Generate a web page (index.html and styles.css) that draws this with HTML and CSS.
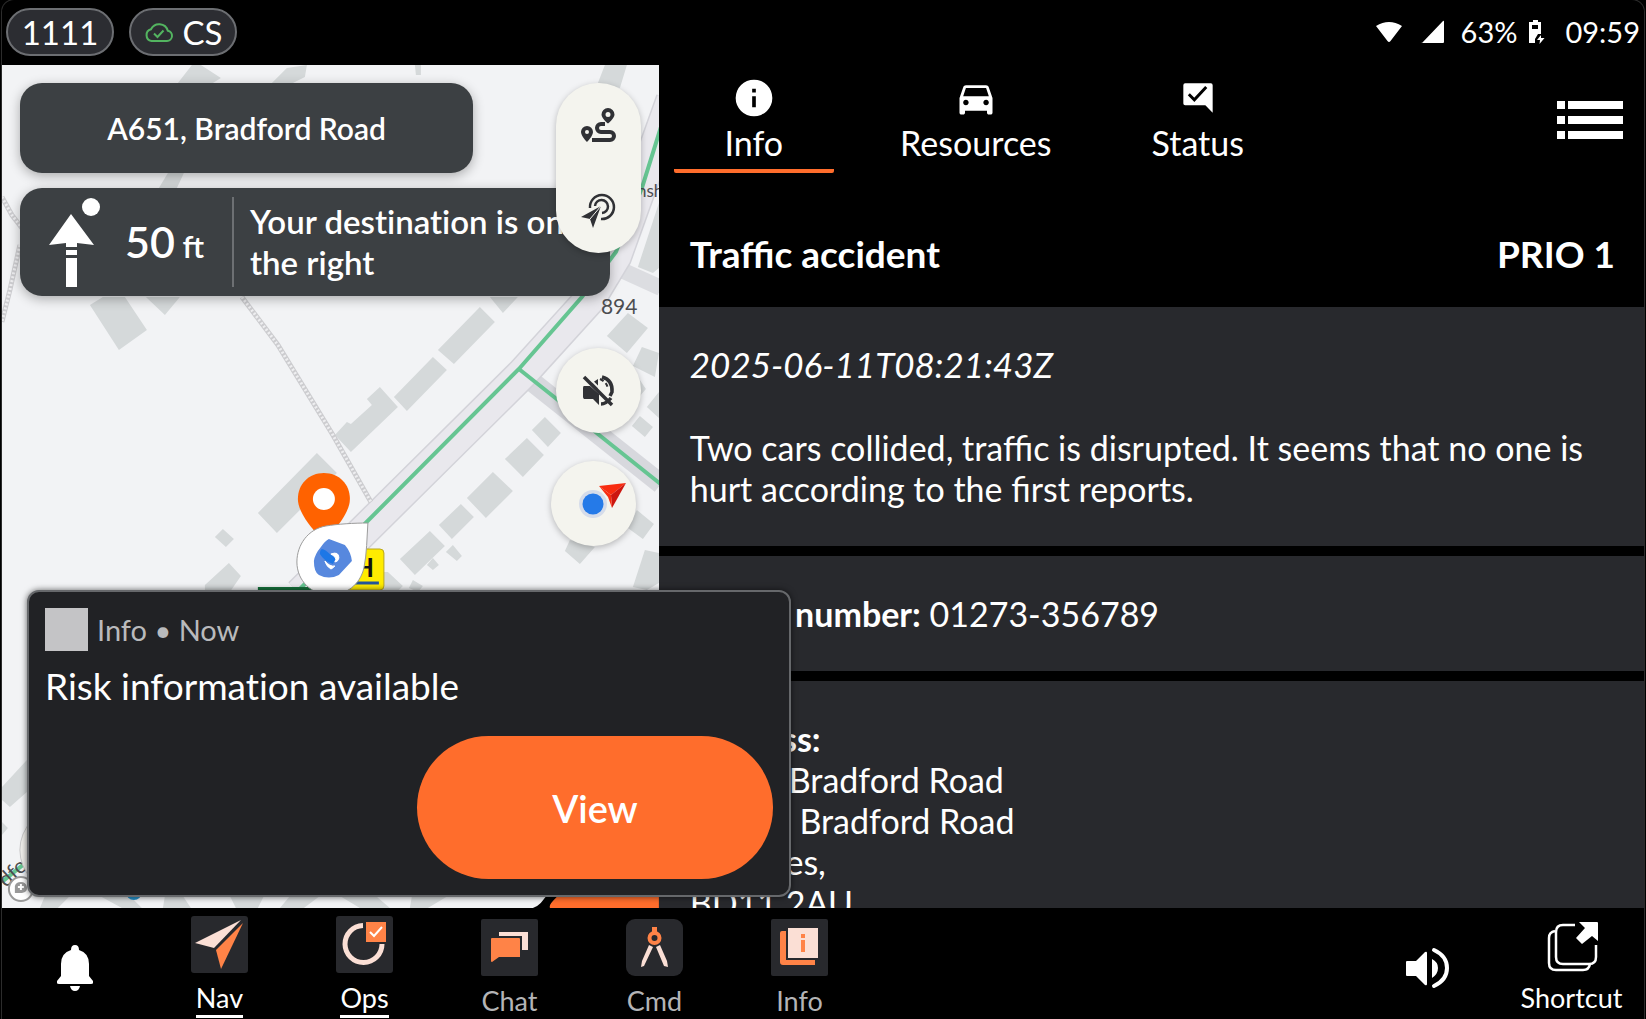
FILE: index.html
```html
<!DOCTYPE html>
<html lang="en">
<head>
<meta charset="utf-8">
<title>Incident 1111</title>
<meta name="viewport" content="width=device-width, initial-scale=1">
<link rel="stylesheet" href="styles.css">
</head>
<body>
<div class="app">
  <header class="topbar">
    <div class="pills">
      <span class="pill">1111</span>
      <span class="pill">
        <svg class="cloud" viewBox="0 0 30 22" aria-hidden="true"><path d="M7.500 20H23a5.200 5.200 0 0 0 .8-10.300A9 9 0 0 0 7 8.300 6 6 0 0 0 7.500 20Z"/><path d="m10 12.500 3.500 3.500 6-6.500"/></svg>
        CS
      </span>
    </div>
    <div class="system">
      <svg class="wifi" viewBox="0 0 28 22" aria-hidden="true"><path d="M1 5Q14-3 27 5L15.500 20q-1.500 2-3 0Z"/></svg>
      <svg class="signal" viewBox="0 0 24 24" aria-hidden="true"><path d="M1 23 22 1q1-1 1 1v20q0 1-1 1H2q-2 0-1-1Z"/></svg>
      <span>63%</span>
      <svg class="battery" viewBox="0 0 16 24" aria-hidden="true"><path fill-rule="evenodd" d="M4 0h5v2h3v12H9l-3 5v4H0V2h4ZM3 5v4h6V5ZM12 15l-4 5h3l-.5 4 5-6h-3.500Z"/></svg>
      <span class="clock">09:59</span>
    </div>
  </header>

  <main class="main">
    <section class="map" aria-label="Navigation map">
      <svg class="map-art" viewBox="2 65 657 843" preserveAspectRatio="xMidYMid slice" aria-hidden="true">
        <rect x="2" y="65" width="657" height="843" fill="#f2f3f5"/>
        <g fill="#d5d9da">
          <path d="M192 65h9l20 13-8 5h-35ZM287 68l20-3-2 12-12 6h-21ZM168 173h16l-7 15h-18ZM90 305l13-8h22l22 33-28 20ZM146 297h34l-15 18ZM415 65h6v10h-5ZM605 65h22l-7 23-22-5Z"/>
          <path d="M490 297l13 16 15-16ZM480 307l15 15-41 42-16-14ZM433 357l14 13-40 41-13-14ZM380 387l18 20-47 45-16-17 12-13 4 2 21-19-5-6ZM545 417l16 16-13 14-16-17ZM527 438l17 17-21 22-18-18ZM493 472l20 19-27 27-19-20ZM461 504l13 13-22 22-13-14ZM430 531l15 15-30 29-15-16ZM453 545l9 11-5 5-11-9ZM433 558l6 7-6 5-6-5ZM380 572h8l15 14-6 6h-17ZM413 580l10 6-5 6-9-4Z"/>
          <path d="M628 313l20 15-21 25-20-17ZM642 347l17 6-4 24-22-11ZM659 392l-12 15 12 11ZM640 416l13 11-8 10-13-11ZM640 380l6 9-6 7ZM637 510l17 14-11 15-15-11ZM570 540l25 7-15 17-15-13ZM645 550l14 3v30l-12 7-14-3ZM659 203v65l-6 5-15-6Z"/>
          <path d="M317 453l20 20-60 60-19-20ZM223 529l11 10-8 8-11-10ZM229 563l12 13-11 16h-25v-7ZM2 787l25-27v32L10 807l-8-7ZM2 822l6 6-6 7Z"/>
          <path d="M45 896h25l-12 12H40ZM100 896h30l12 12h-20ZM165 896h18l8 12h-28ZM230 896h34l-6 12h-22ZM290 896h30l-16 12h-24ZM340 896h36l14 12h-30ZM412 896h36l-20 12h-18Z"/>
        </g>
        <path d="M617 268l44 20" stroke="#dcdde1" stroke-width="16" fill="none"/>
        <path d="M530 380l131 104" stroke="#d7d8dd" stroke-width="20" fill="none"/>
        <path d="M672 100 616 256 590 299 522 374 300 594" stroke="#d3d3d9" stroke-width="33" fill="none"/>
        <path d="M672 100 616 256 590 299 522 374 300 594" stroke="#e9e8ed" stroke-width="30" fill="none"/>
        <path d="M242 297 278 345 333 435 371 502M2 197 12 215 22 228M20 245 10 290 2 322" stroke="#cccccf" stroke-width="5" fill="none"/>
        <path d="M242 297 278 345 333 435 371 502M2 197 12 215 22 228M20 245 10 290 2 322" stroke="#eeeef0" stroke-width="3" stroke-dasharray="2 2" fill="none"/>
        <path d="M662 124 642 188 616 252 582 297 519 369 300 589M519 369 558 400 598 434 662 485M2 882 34 856" stroke="#66c592" stroke-width="4" fill="none"/>
        <path d="M258 587h56l-4 6h-52Z" fill="#17733c"/>
        <text class="map-label" x="601" y="314">894</text>
        <text class="map-label small" x="637" y="197">nsh</text>
        <text class="map-label" x="6" y="888" transform="rotate(-42 6 888)">dfor</text>
        <circle cx="62" cy="850" r="42" fill="#f0efeb" stroke="#c9c9c9"/>
        <circle cx="21" cy="889" r="12" fill="#fff" stroke="#999" stroke-width="2"/>
        <path d="M15 893v-7q1-4 6-4t6 5-5 6Z" fill="#999"/>
        <path d="M21 884v6m-3-3h6" stroke="#fff" stroke-width="2"/>
        <circle cx="134" cy="892" r="8" fill="#2590c8"/>
        <path d="M533 908q8-2 17-18h109v18Z" fill="#000"/>
        <path d="M550 908q-1-3 3-7l16-17h90v24Z" fill="#ff6d2c"/>
        <rect x="345" y="549" width="39" height="41" rx="4" fill="#ffec00" stroke="#b8a61c"/>
        <path d="M354 583h25" stroke="#23559b" stroke-width="3"/>
        <text class="heli" x="354" y="577">H</text>
        <path d="M324 473c-15 0-26 11-26 26 0 18 26 42 26 42s26-24 26-42c0-15-11-26-26-26Z" fill="#ff6200"/>
        <circle cx="324" cy="499" r="11" fill="#fff"/>
        <path d="M368 523c-14 0-30 1-42 3-18 3-29 19-29 36 0 19 15 33 33 33 16 0 30-10 34-27 3-14 3-31 4-45Z" fill="#fff" stroke="#9c9c9c" stroke-width="1"/>
        <path d="M329 539l16 6q6 7 7 16l-13 14q-10 5-20 0-5-3-5-14 1-7 7-14 4-6 8-8Z" fill="#5788de"/>
        <path d="M322 549q3 0 9 6l5 3-3 6q-9-3-13-10 0-4 2-5Z" fill="#1d77e6"/>
        <path d="M325 561q5 6 10 5-3 3-4 3-5-3-6-8ZM331 554q8-3 8 4-1 4-4 4 2-3 0-5-2-2-4-3Z" fill="#fff" stroke="#fff"/>
      </svg>

      <div class="guidance">
        <div class="street">A651, Bradford Road</div>
        <div class="turn">
          <svg class="turn-arrow" viewBox="0 0 52 92" aria-hidden="true"><circle cx="42" cy="11" r="9"/><path d="M22 18 45 49 28 47v4H17v-4L0 49ZM17 54h11v5H17ZM17 62h11v29H17Z"/></svg>
          <div class="distance">50 <small>ft</small></div>
          <p class="instruction">Your destination is on the right</p>
        </div>
      </div>

      <div class="controls">
        <div class="control-group">
          <button class="control" type="button" aria-label="Route">
            <svg viewBox="0 0 36 36" aria-hidden="true"><path fill-rule="evenodd" d="M28 0a6.500 6.500 0 0 1 6.500 6.500c0 4-6.500 9-6.500 9s-6.500-5-6.500-9A6.500 6.500 0 0 1 28 0Zm0 4a2.500 2.500 0 1 0 0 5 2.500 2.500 0 0 0 0-5ZM7 18a6 6 0 0 1 6 6c0 4-6 10-6 10S1 28 1 24a6 6 0 0 1 6-6Zm0 4a2 2 0 1 0 0 4 2 2 0 0 0 0-4Z"/><path d="M25 16h-4a4 4 0 0 0 0 8h9a4 4 0 0 1 0 8H12" fill="none" stroke="currentColor" stroke-width="4"/></svg>
          </button>
          <button class="control" type="button" aria-label="Follow position">
            <svg viewBox="0 0 36 36" aria-hidden="true"><path d="M1 24 21 13 13 35l-3-9Z"/><path d="M10 15a12 12 0 1 1 11 11M15 13a6.500 6.500 0 1 1 7 7" fill="none" stroke="currentColor" stroke-width="2.500"/><path d="M21 13 10 26" stroke="#f4f4ee"/></svg>
          </button>
        </div>
        <button class="control round" type="button" aria-label="Unmute">
          <svg viewBox="0 0 36 36" aria-hidden="true"><path d="M4 13h6l9 8v11l-6-6H4q-1-1-1-2v-9q0-2 1-2ZM12 10l6-4v10Z"/><path d="M22 4q11 3 10 15l-2 4" fill="none" stroke="currentColor" stroke-width="3.500"/><path d="M20 6q7 3 8 10" fill="none" stroke="currentColor" stroke-width="2" stroke-dasharray="4 3"/><path d="M7 3 34 30" stroke="#f4f4ee" stroke-width="2"/><path d="M4 4l28 28M21 31q5 0 10-6" fill="none" stroke="currentColor" stroke-width="3.500"/></svg>
        </button>
        <button class="control round compass" type="button" aria-label="Compass">
          <svg viewBox="0 0 84 84" aria-hidden="true"><circle cx="42" cy="42" r="14" fill="#d5dcea"/><circle cx="42" cy="42" r="10.500" fill="#257ae8"/><path d="M48 24 75 21 60 33Z" fill="#f82c10"/><path d="M60 33 75 21 61 46Z" fill="#cc1710"/><path d="M48 24 60 33 61 46 57 35Z" fill="#f82c10"/></svg>
        </button>
      </div>
    </section>

    <section class="incident">
      <nav class="tabs">
        <a class="tab active" href="#info">
          <svg viewBox="0 0 24 24" aria-hidden="true"><path d="M12 2a10 10 0 1 0 0 20 10 10 0 0 0 0-20Zm1 15h-2v-6h2Zm0-8h-2V7h2Z"/></svg>
          Info
        </a>
        <a class="tab" href="#resources">
          <svg viewBox="0 0 24 24" aria-hidden="true"><path d="M18.920 6.010C18.720 5.420 18.160 5 17.500 5h-11c-.66 0-1.210.42-1.420 1.010L3 12v8c0 .55.45 1 1 1h1c.55 0 1-.45 1-1v-1h12v1c0 .55.45 1 1 1h1c.55 0 1-.45 1-1v-8l-2.080-5.990zM6.500 16c-.83 0-1.500-.67-1.500-1.500S5.670 13 6.500 13s1.500.67 1.500 1.500S7.330 16 6.500 16zm11 0c-.83 0-1.500-.67-1.500-1.500s.67-1.500 1.500-1.500 1.500.67 1.500 1.500-.67 1.500-1.500 1.500zM5 11l1.500-4.500h11L19 11H5z"/></svg>
          Resources
        </a>
        <a class="tab" href="#status">
          <svg viewBox="0 0 24 24" aria-hidden="true"><path d="M5 4h14q1 0 1 1v15l-4-4H5q-1 0-1-1V5q0-1 1-1Z"/><path d="m7 10 3 3 6.500-7" fill="none" stroke="#000" stroke-width="1.600"/></svg>
          Status
        </a>
        <button class="menu" type="button" aria-label="Menu">
          <svg viewBox="0 0 66 38" aria-hidden="true"><path d="M0 0h8v8H0ZM11 0h55v8H11ZM0 15h8v8H0ZM11 15h55v8H11ZM0 30h8v8H0ZM11 30h55v8H11Z"/></svg>
        </button>
      </nav>
      <div class="title">
        <h1>Traffic accident</h1>
        <strong>PRIO 1</strong>
      </div>
      <div class="details">
        <article class="card">
          <time datetime="2025-06-11T08:21:43Z">2025-06-11T08:21:43Z</time>
          <p>Two cars collided, traffic is disrupted. It seems that no one is hurt according to the first reports.</p>
        </article>
        <article class="card"><b>Phone number:</b> 01273-356789</article>
        <article class="card"><b>Address:</b><br>Hotel, Bradford Road<br>No 61. Bradford Road<br>Birchnes,<br>BD11 2AU</article>
      </div>
    </section>

    <aside class="notice" role="alert">
      <div class="notice-head"><span class="notice-icon"></span>Info • Now</div>
      <p>Risk information available</p>
      <button class="view" type="button">View</button>
    </aside>
  </main>

  <footer class="dock">
    <button class="dock-item plain" type="button" aria-label="Notifications">
      <svg class="bell" viewBox="0 0 36 46" aria-hidden="true"><path d="M18 0q4 0 4 5 10 3 10 14v12l4 5q1 3-2 3H2q-3 0-2-3l4-5V19Q4 8 14 5q0-5 4-5ZM13 41h10q-1 5-5 5t-5-5Z"/></svg>
    </button>
    <a class="dock-item active" href="#nav">
      <svg class="tile" viewBox="0 0 57 57" aria-hidden="true"><rect width="57" height="57" rx="3"/><path class="pale" d="M4 27 50 4 23 32Z"/><path class="orange" d="M52 7 30 53 25 34Z"/></svg>
      <span>Nav</span>
    </a>
    <a class="dock-item active" href="#ops">
      <svg class="tile" viewBox="0 0 57 57" aria-hidden="true"><rect width="57" height="57" rx="3"/><path d="M27 9.500A18.500 18.500 0 1 0 46 28" fill="none" stroke="#fbdfd5" stroke-width="5"/><path class="orange" d="M30 6h20v20H30Z"/><path d="m34 16 4 4 8-9" fill="none" stroke="#fff" stroke-width="2"/></svg>
      <span>Ops</span>
    </a>
    <a class="dock-item" href="#chat">
      <svg class="tile" viewBox="0 0 57 57" aria-hidden="true"><rect width="57" height="57" rx="2"/><path class="pale" d="M18 13h29v18h-6V17H18Z"/><path class="orange" d="M11 19h27q1 0 1 1v18H18l-7 5q-1 0-1-1V20q0-1 1-1Z"/></svg>
      <span>Chat</span>
    </a>
    <a class="dock-item" href="#cmd">
      <svg class="tile" viewBox="0 0 57 57" aria-hidden="true"><rect width="57" height="57" rx="9"/><path class="pale" d="m23 26 4 2-9 19-3 1 1-6ZM34 26l-4 2 8 19 4 1-1-6Z"/><path class="orange" d="M26 8h5v7h-5Z"/><circle cx="28.500" cy="19" r="5" fill="none" stroke="#ff8347" stroke-width="4"/></svg>
      <span>Cmd</span>
    </a>
    <a class="dock-item" href="#info">
      <svg class="tile" viewBox="0 0 57 57" aria-hidden="true"><rect width="57" height="57" rx="2"/><path class="orange" d="M11 12h4v29h29v5H12q-3 0-3-3V14q0-2 2-2Z"/><path class="pale" d="M17 9h30v30H17Z"/><path class="orange" d="M30 15h4v4h-4ZM30 21h4v12h-4Z"/></svg>
      <span>Info</span>
    </a>
    <button class="dock-item plain push" type="button" aria-label="Volume">
      <svg class="volume" viewBox="0 0 44 42" aria-hidden="true"><path d="M2 14h9L20 5q2-1 2 1v31q0 2-2 1l-9-9H2q-1 0-1-1V15q0-1 1-1ZM27 12q6 3 6 9t-6 10Z"/><path d="M29 3q13 6 13 18T29 39" fill="none" stroke="currentColor" stroke-width="4" stroke-linecap="round"/></svg>
    </button>
    <button class="dock-item shortcut" type="button">
      <svg class="tile" viewBox="0 0 57 57" aria-hidden="true"><path d="M32 9H20q-7 0-7 7v25q0 7 7 7h26q7 0 7-7V29M12 15q-6 1-6 7v25q0 7 7 7h27q6 0 7-6" fill="none" stroke="#fff" stroke-width="2.500"/><path fill="#fff" d="M36 6h18q1 0 1 1v18l-6-5-10 8-6-6 9-10Z"/></svg>
      <span>Shortcut</span>
    </button>
  </footer>
</div>
</body>
</html>
```
FILE: styles.css
```css
* {
  box-sizing: border-box;
}

body {
  margin: 0;
  background: #000;
  color: #fff;
  font-family: Lato, "Liberation Sans", sans-serif;
}

h1,
p {
  margin: 0;
}

button {
  border: 0;
  padding: 0;
  background: none;
  color: inherit;
  font: inherit;
  cursor: pointer;
}

a {
  color: inherit;
  text-decoration: none;
}

svg {
  display: block;
  fill: currentColor;
}

.app {
  display: flex;
  flex-direction: column;
  height: 100vh;
  margin: 0 2px;
  border-radius: 12px 12px 0 0;
  box-shadow: 0 0 0 1px #2c2c2c;
}

/* Status bar */

.topbar {
  display: flex;
  justify-content: space-between;
  align-items: center;
  height: 65px;
  flex: none;
  padding: 0 4px 2px;
}

.pills,
.pill,
.system {
  display: flex;
  align-items: center;
}

.pills {
  gap: 15px;
}

.pill {
  justify-content: center;
  gap: 9px;
  width: 108px;
  height: 48px;
  border: 2px solid #6c6e72;
  border-radius: 24px;
  background: #2c2d32;
  font-size: 33px;
}

.cloud {
  width: 30px;
  height: 22px;
  fill: none;
  stroke: #53b460;
  stroke-width: 2;
}

.system {
  font-size: 29px;
}

.wifi {
  width: 28px;
  height: 22px;
  margin-right: 18px;
}

.signal {
  width: 24px;
  height: 24px;
  margin-right: 16px;
}

.battery {
  width: 16px;
  height: 24px;
  margin: 0 20px 0 12px;
}

/* Map */

.main {
  position: relative;
  display: grid;
  grid-template-columns: 2fr 3fr;
  flex: 1;
  min-height: 0;
}

.map {
  position: relative;
  padding: 18px;
  overflow: hidden;
  background: #f2f3f5;
}

.map-art {
  position: absolute;
  inset: 0;
  width: 100%;
  height: 100%;
}

.map-label {
  fill: #4c4d50;
  font-size: 21px;
}

.map-label.small {
  font-size: 17px;
}

.heli {
  fill: #111;
  font-size: 26px;
  font-weight: 700;
}

.guidance {
  position: relative;
  display: flex;
  flex-direction: column;
  gap: 15px;
  font-weight: 600;
}

.street,
.turn {
  display: flex;
  align-items: center;
  border-radius: 22px;
  background: #3c4043;
  box-shadow: 0 3px 12px rgba(0, 0, 0, 0.3);
}

.street {
  justify-content: center;
  width: 73%;
  height: 90px;
  font-size: 30px;
}

.turn {
  width: 95%;
  height: 108px;
  padding-left: 29px;
}

.turn-arrow {
  width: 52px;
  height: 92px;
}

.distance {
  width: 133px;
  height: 90px;
  padding-left: 24px;
  border-right: 2px solid #6d7073;
  font-size: 43px;
  line-height: 90px;
}

.distance small {
  margin-left: -3px;
  font-size: 31px;
}

.instruction {
  flex: 1;
  padding: 0 32px 0 16px;
  font-size: 33px;
  font-variant-ligatures: none;
  line-height: 41px;
}

.controls {
  position: absolute;
  top: 18px;
  right: 18px;
  display: flex;
  flex-direction: column;
  align-items: flex-end;
}

.control-group {
  display: flex;
  flex-direction: column;
  margin-bottom: 95px;
}

.control {
  display: grid;
  place-items: center;
  width: 85px;
  height: 85px;
  color: #303135;
}

.control svg {
  width: 36px;
  height: 36px;
}

.control-group,
.round {
  border-radius: 43px;
  background: #f4f4ee;
  box-shadow: 0 2px 6px rgba(0, 0, 0, 0.25);
}

.compass {
  margin: 28px 5px 0 0;
}

.control.compass svg {
  width: 84px;
  height: 84px;
}

/* Incident */

.incident {
  display: flex;
  flex-direction: column;
  min-width: 0;
  min-height: 0;
}

.tabs {
  display: flex;
  flex: none;
  align-items: flex-start;
  gap: 62px;
  padding: 11px 21px 0 15px;
}

.tab {
  display: flex;
  flex-direction: column;
  align-items: center;
  min-width: 160px;
  height: 97px;
  font-size: 34px;
  line-height: 46px;
}

.tab svg {
  width: 44px;
  height: 44px;
}

.tab.active {
  border-bottom: 4px solid #ff6d2c;
  border-radius: 2px;
}

.menu {
  margin: 25px 0 0 auto;
}

.menu svg {
  width: 66px;
  height: 38px;
}

.title {
  display: flex;
  flex: none;
  justify-content: space-between;
  align-items: center;
  height: 134px;
  padding: 26px 29px 0 31px;
  font-size: 37px;
}

.title h1,
.title strong {
  font-size: inherit;
  font-weight: 700;
}

.details {
  display: flex;
  flex: 1;
  flex-direction: column;
  gap: 10px;
  overflow: hidden;
}

.card {
  flex: none;
  padding: 37px 31px;
  background: #28292d;
  font-size: 34px;
  line-height: 41px;
}

.card time {
  display: block;
  margin-bottom: 42px;
  font-size: 35px;
  font-style: italic;
}

.card b {
  font-weight: 700;
}

/* Notification */

.notice {
  position: absolute;
  bottom: 11px;
  left: 25px;
  display: flex;
  flex-direction: column;
  width: 764px;
  max-width: 96%;
  height: 307px;
  padding: 16px;
  border: 2px solid #66686b;
  border-radius: 12px;
  background: #212225;
  box-shadow: 0 0 6px rgba(0, 0, 0, 0.6);
}

.notice-head {
  display: flex;
  align-items: center;
  gap: 9px;
  color: #b9babc;
  font-size: 29px;
}

.notice-icon {
  width: 43px;
  height: 43px;
  background: #c4c4c6;
}

.notice p {
  margin-top: 11px;
  font-size: 37px;
  font-variant-ligatures: none;
  line-height: 48px;
}

.view {
  align-self: flex-end;
  width: 356px;
  height: 143px;
  margin-top: auto;
  border-radius: 72px;
  background: #ff6d2c;
  font-size: 38px;
  font-weight: 600;
}

/* Dock */

.dock {
  display: flex;
  flex: none;
  height: 111px;
}

.dock-item {
  display: flex;
  flex-direction: column;
  align-items: center;
  width: 145px;
  padding-top: 11px;
  color: #b4b4b6;
  font-size: 27px;
  line-height: 34px;
}

.dock-item span {
  margin-top: 8px;
}

.dock-item.active,
.dock-item.shortcut {
  padding-top: 8px;
  color: #fff;
}

.dock-item.active span {
  border-bottom: 3px solid #fff;
}

.dock-item.plain {
  justify-content: center;
  padding-top: 8px;
  color: #fff;
}

.dock-item.push {
  margin-left: auto;
}

.tile {
  width: 57px;
  height: 57px;
}

.tile rect {
  fill: #28292d;
}

.pale {
  fill: #fbdfd5;
}

.orange {
  fill: #ff8347;
}

.bell {
  width: 36px;
  height: 46px;
}

.volume {
  width: 44px;
  height: 42px;
}
```
